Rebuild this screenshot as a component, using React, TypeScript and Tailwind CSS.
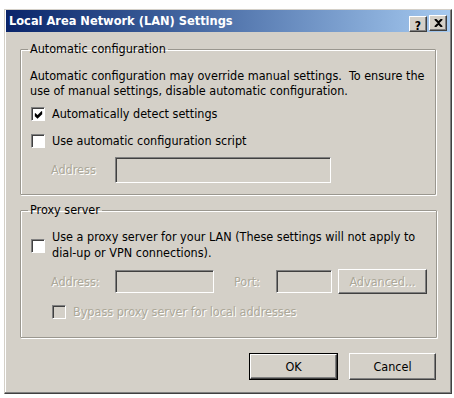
import { FC, ReactNode } from 'react';

const font = { fontFamily: '"DejaVu Sans Condensed", "DejaVu Sans", sans-serif' };

const Check: FC<{ checked?: boolean; disabled?: boolean }> = ({ checked, disabled }) => (
  <span
    className={`inline-flex w-[14px] h-[14px] shrink-0 items-center justify-center border-t border-l border-[#808080] border-b border-r border-b-white border-r-white shadow-[inset_1px_1px_0_#404040] ${
      disabled ? 'bg-[#d4d0c8]' : 'bg-white'
    }`}
  >
    {checked && (
      <svg width="9" height="9" viewBox="0 0 9 9">
        <path d="M1 3.5 L3.5 6 L8 1.5 M1 4.5 L3.5 7 L8 2.5 M1 5.5 L3.5 8 L8 3.5" stroke="#000" strokeWidth="1.2" fill="none" />
      </svg>
    )}
  </span>
);

const Field: FC<{ className: string }> = ({ className }) => (
  <div
    className={`bg-[#d4d0c8] border-t border-l border-[#808080] border-b border-r border-b-white border-r-white shadow-[inset_1px_1px_0_#404040,inset_-1px_-1px_0_#d4d0c8] ${className}`}
  />
);

const Button: FC<{ children: ReactNode; className?: string; isDefault?: boolean; disabled?: boolean }> = ({
  children,
  className = '',
  isDefault,
  disabled
}) => (
  <div className={`${isDefault ? 'border border-black' : ''} ${className}`}>
    <button
      className={`w-full h-full bg-[#d4d0c8] border-t border-l border-white border-b border-r border-b-[#404040] border-r-[#404040] shadow-[inset_-1px_-1px_0_#808080] text-[12.5px] ${
        disabled ? 'text-[#aca899] [text-shadow:1px_1px_0_#fff]' : 'text-black'
      }`}
    >
      {children}
    </button>
  </div>
);

const GroupBox: FC<{ title: string; children: ReactNode; className?: string }> = ({ title, children, className = '' }) => (
  <fieldset
    className={`border border-[#9a978f] shadow-[inset_1px_1px_0_#fff,1px_1px_0_#fff] rounded-[1px] px-[9px] ${className}`}
  >
    <legend className="px-[2px] ml-[-2px] leading-[14px]">{title}</legend>
    {children}
  </fieldset>
);

const disabledText = 'text-[#aca899] [text-shadow:1px_1px_0_#fff]';

export default function App() {
  return (
    <div className="w-[454px] h-[398px] bg-white pt-[9px] pl-[4px]" style={font}>
      <div className="w-[448px] h-[385px] bg-[#d4d0c8] border-r border-b border-[#404040] border-t border-l border-t-[#d4d0c8] border-l-[#d4d0c8] shadow-[inset_-1px_-1px_0_#808080,inset_1px_1px_0_#fff] flex flex-col">
        <div className="h-[22px] mx-[1px] flex items-center justify-between pl-[3px] pr-[3px] bg-gradient-to-r from-[#0a246a] to-[#a6caf0]">
          <span className="text-white font-bold text-[12.7px]">Local Area Network (LAN) Settings</span>
          <div className="flex gap-[2px]">
            <Button className="w-[18px] h-[16px]">
              <span className="font-bold text-[12px] leading-none">?</span>
            </Button>
            <Button className="w-[18px] h-[16px]">
              <svg width="9" height="8" viewBox="0 0 9 8" className="mx-auto">
                <path d="M1 0 L4.5 3.5 L8 0 M1 8 L4.5 4.5 L8 8" stroke="#000" strokeWidth="2" fill="none" />
              </svg>
            </Button>
          </div>
        </div>

        <div className="flex flex-col px-[15px] pt-[10px] text-[12.5px] leading-[18px] text-black">
          <GroupBox title="Automatic configuration" className="h-[153px] pt-[12px]">
            <p className="leading-[15px]">
              Automatic configuration may override manual settings.&nbsp; To ensure the use of manual settings,
              disable automatic configuration.
            </p>
            <label className="flex items-center gap-[7px] mt-[7px] ml-[1px]">
              <Check checked />
              <span>Automatically detect settings</span>
            </label>
            <label className="flex items-center gap-[7px] mt-[9px] ml-[1px]">
              <Check />
              <span>Use automatic configuration script</span>
            </label>
            <div className="flex items-center mt-[7px] ml-[21px]">
              <span className={`w-[64px] ${disabledText}`}>Address</span>
              <Field className="w-[216px] h-[26px]" />
            </div>
          </GroupBox>

          <GroupBox title="Proxy server" className="h-[135px] mt-[8px] pt-[12px]">
            <div className="flex items-start gap-[7px] ml-[1px]">
              <span className="mt-[10px]">
                <Check />
              </span>
              <p className="leading-[16px]">
                Use a proxy server for your LAN (These settings will not apply to dial-up or VPN connections).
              </p>
            </div>
            <div className="flex items-center mt-[8px] ml-[21px]">
              <span className={`w-[64px] ${disabledText}`}>Address:</span>
              <Field className="w-[99px] h-[23px]" />
              <span className={`ml-[20px] w-[42px] ${disabledText}`}>Port:</span>
              <Field className="w-[56px] h-[23px]" />
              <Button disabled className="ml-[6px] w-[89px] h-[25px]">
                Advanced...
              </Button>
            </div>
            <label className="flex items-center gap-[7px] mt-[9px] ml-[22px]">
              <Check disabled />
              <span className={disabledText}>Bypass proxy server for local addresses</span>
            </label>
          </GroupBox>

          <div className="flex justify-end gap-[11px] mt-[15px]">
            <Button isDefault className="w-[89px] h-[27px]">
              OK
            </Button>
            <Button className="w-[87px] h-[27px]">Cancel</Button>
          </div>
        </div>
      </div>
    </div>
  );
}
